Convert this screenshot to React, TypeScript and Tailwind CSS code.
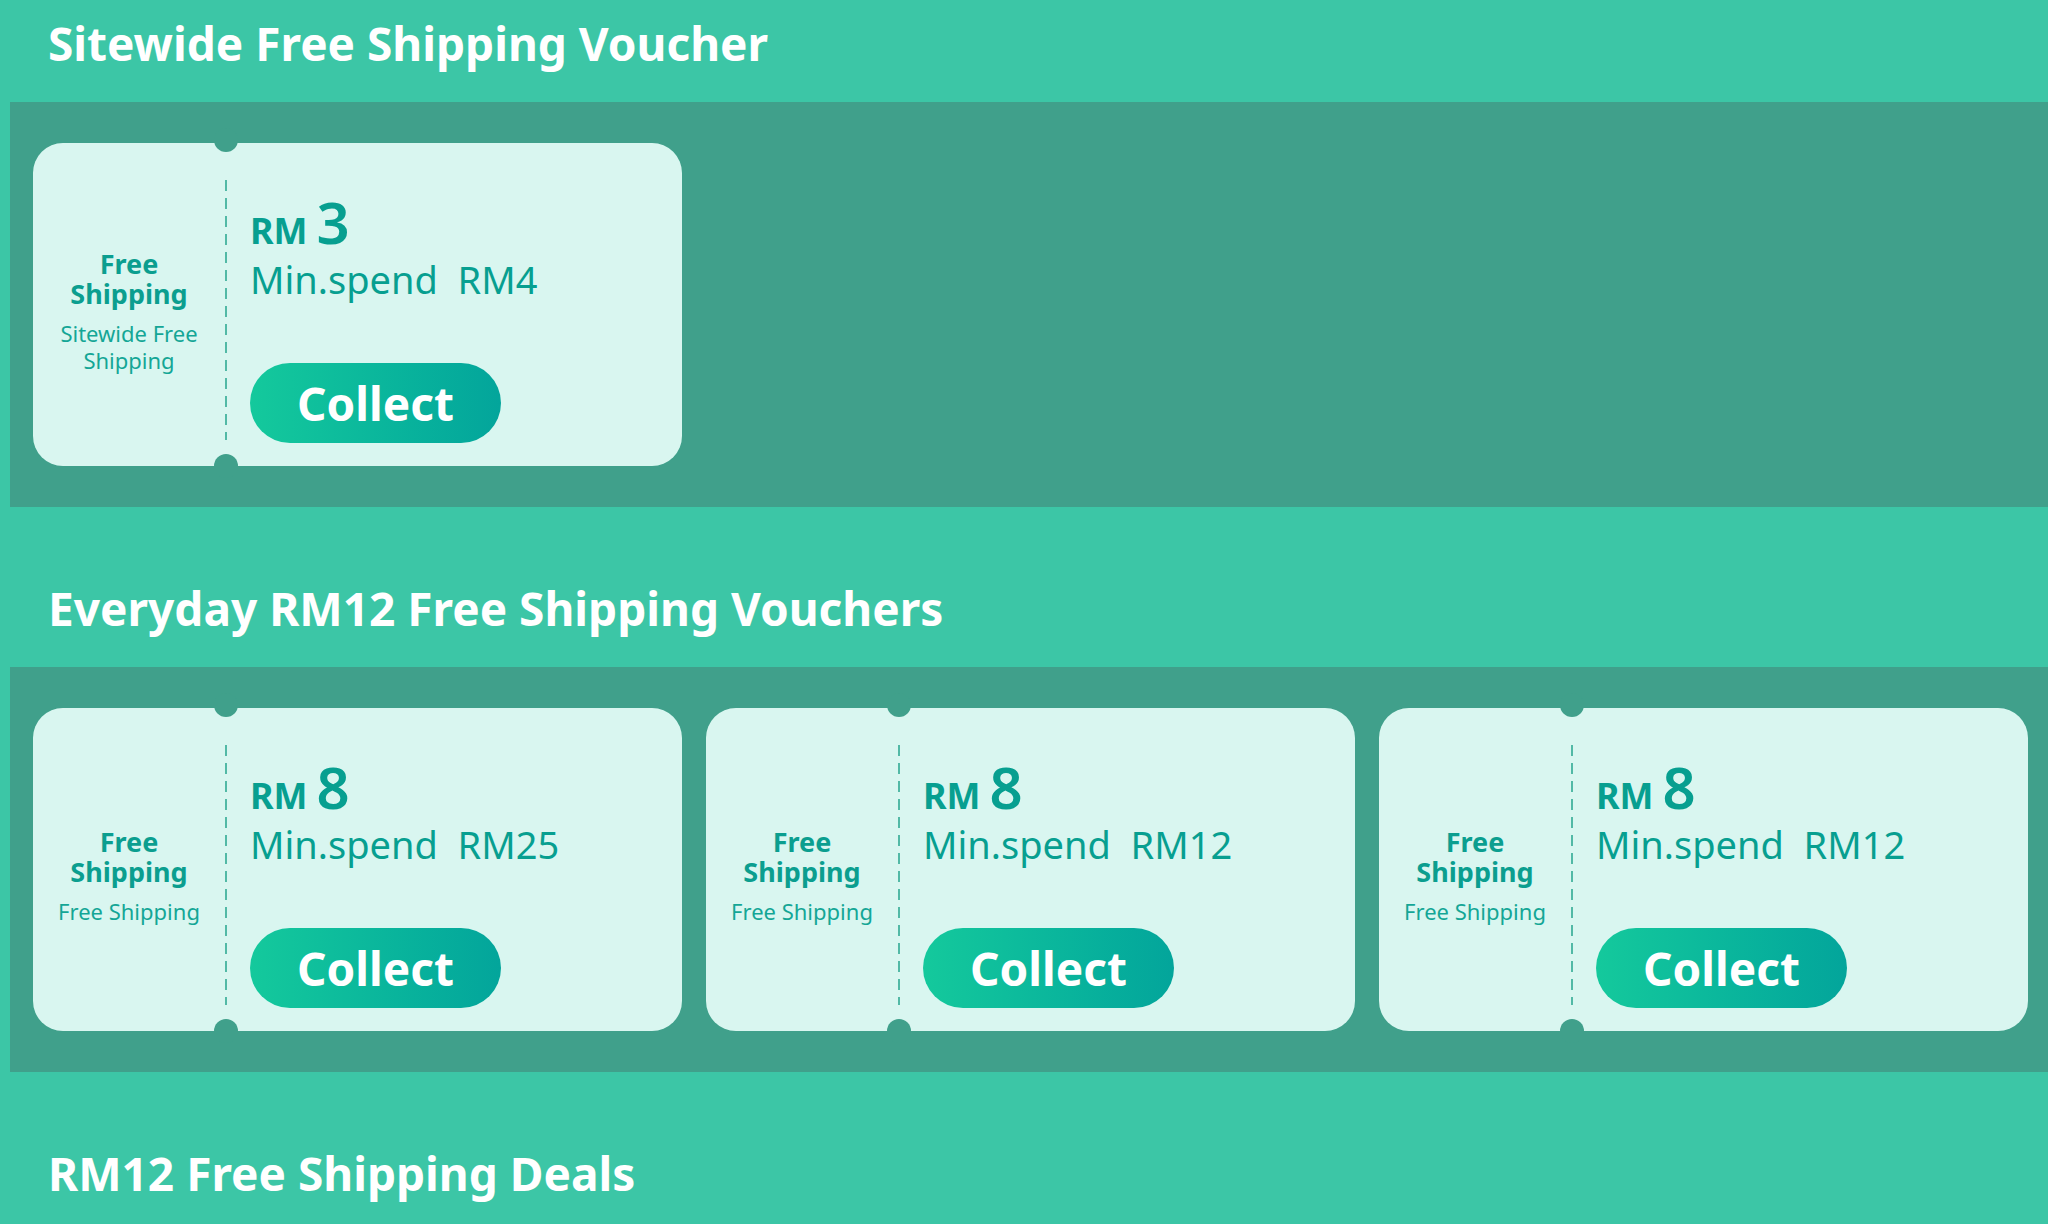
import React from "react";

type Voucher = {
  amount: string;
  minSpend: string;
  subtitle: string[];
};

const sections: { title: string; vouchers: Voucher[] }[] = [
  {
    title: "Sitewide Free Shipping Voucher",
    vouchers: [{ amount: "3", minSpend: "RM4", subtitle: ["Sitewide Free", "Shipping"] }],
  },
  {
    title: "Everyday RM12 Free Shipping Vouchers",
    vouchers: [
      { amount: "8", minSpend: "RM25", subtitle: ["Free Shipping"] },
      { amount: "8", minSpend: "RM12", subtitle: ["Free Shipping"] },
      { amount: "8", minSpend: "RM12", subtitle: ["Free Shipping"] },
    ],
  },
];

const VoucherCard = ({ v }: { v: Voucher }) => {
  return (
    <div className="relative flex w-[649px] h-[323px] shrink-0 rounded-[30px] bg-[#d9f6f0]">
      {/* notches */}
      <div className="absolute left-[181px] -top-[15px] w-[24px] h-[24px] rounded-full bg-[#40a08b]"></div>
      <div className="absolute left-[181px] -bottom-[12px] w-[24px] h-[24px] rounded-full bg-[#40a08b]"></div>

      <div className="w-[192px] flex flex-col items-center justify-center text-center text-[#0b9e8f] pt-[13px]">
        <div className="text-[27px] font-bold leading-[30px]">Free</div>
        <div className="text-[27px] font-bold leading-[30px]">Shipping</div>
        <div className="mt-[11px] text-[22px] leading-[27px] text-[#14a696]">
          {v.subtitle.map((s) => (
            <div key={s}>{s}</div>
          ))}
        </div>
      </div>

      <div className="w-[2px] mt-[37px] mb-[26px] bg-[repeating-linear-gradient(to_bottom,#52b9a6_0_11px,transparent_11px_18px)]"></div>

      <div className="flex flex-col pl-[23px] pt-[50px] text-[#079f90]">
        <div className="flex items-baseline gap-[9px] leading-none">
          <span className="text-[36px] font-bold">RM</span>
          <span className="text-[58px] font-semibold">{v.amount}</span>
        </div>
        <div className="mt-[6px] text-[38px] leading-[44px] whitespace-pre">
          {"Min.spend  " + v.minSpend}
        </div>
        <button className="mt-[62px] w-[251px] h-[80px] rounded-full bg-gradient-to-r from-[#14c99c] to-[#03a59b] text-white text-[46px] font-bold leading-none">
          Collect
        </button>
      </div>
    </div>
  );
};

const Title = ({ text }: { text: string }) => {
  return (
    <h2 className="h-[102px] pl-[48px] pt-[14px] text-[46px] font-bold leading-[58px] text-white">
      {text}
    </h2>
  );
};

const App = () => {
  return (
    <div
      className="w-full min-h-[1224px] bg-[#3cc6a6]"
      style={{ fontFamily: '"Noto Sans", "Open Sans", sans-serif' }}
    >
      {sections.map((sec, i) => (
        <section key={sec.title} className={i === 0 ? "" : "mt-[58px]"}>
          <Title text={sec.title} />
          <div className="ml-[10px] bg-[#40a08b] px-[23px] pt-[41px] pb-[41px] flex gap-[24px]">
            {sec.vouchers.map((v, j) => (
              <VoucherCard key={j} v={v} />
            ))}
          </div>
        </section>
      ))}
      <section className="mt-[58px]">
        <Title text="RM12 Free Shipping Deals" />
      </section>
    </div>
  );
};

export default App;
